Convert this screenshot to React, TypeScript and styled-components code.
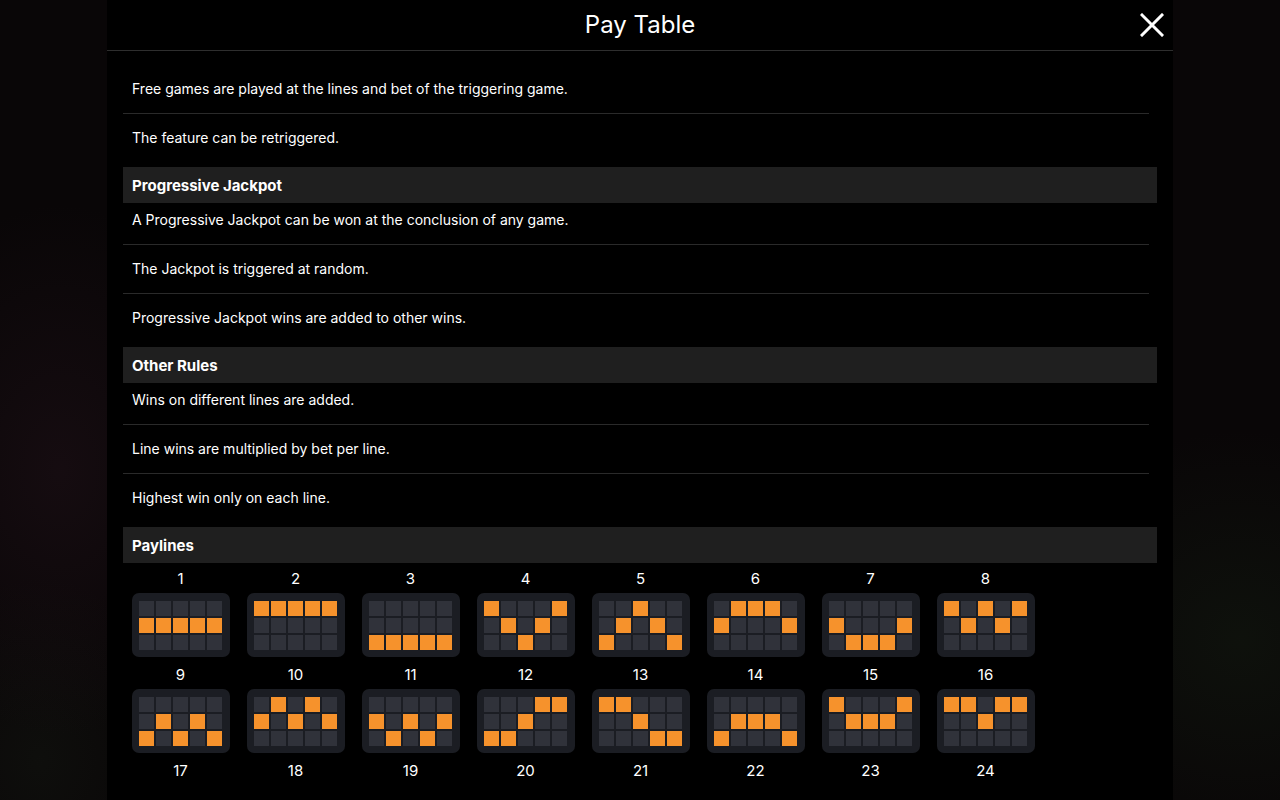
import React from "react";
import styled, { createGlobalStyle } from "styled-components";

const GlobalStyle = createGlobalStyle`
  html, body {
    margin: 0;
    padding: 0;
    height: 100%;
    overflow: hidden;
    background: #070506;
  }
  body {
    font-family: Inter, "Noto Sans", "Liberation Sans", sans-serif;
    color: #fff;
  }
`;

const Screen = styled.div`
  width: 100vw;
  height: 100vh;
  display: flex;
  justify-content: center;
  background:
    radial-gradient(ellipse 260px 380px at 60px 470px, rgba(50, 26, 38, 0.3), transparent 70%),
    radial-gradient(ellipse 300px 300px at 1240px 640px, rgba(22, 34, 20, 0.4), transparent 70%),
    radial-gradient(ellipse 200px 260px at 40px 760px, rgba(24, 30, 22, 0.35), transparent 70%),
    #090607;
`;

const Panel = styled.div`
  width: 1066px;
  height: 100%;
  box-sizing: border-box;
  padding-bottom: 16px;
  background: #000;
  display: flex;
  flex-direction: column;
`;

const Header = styled.header`
  height: 51px;
  flex-shrink: 0;
  display: grid;
  grid-template-columns: 1fr auto 1fr;
  align-items: center;
  border-bottom: 1px solid #2e2e2e;
  box-sizing: border-box;
`;

const Title = styled.h1`
  grid-column: 2;
  margin: 0;
  font-size: 24px;
  font-weight: 400;
  line-height: 50px;
`;

const CloseButton = styled.button`
  grid-column: 3;
  justify-self: end;
  margin-right: 8px;
  width: 26px;
  height: 26px;
  padding: 0;
  border: none;
  background: none;
  cursor: pointer;
  display: flex;
  align-items: center;
  justify-content: center;
`;

const Content = styled.div`
  flex: 1;
  min-height: 0;
  overflow: hidden;
  padding: 14px 16px 0;
  display: flex;
  flex-direction: column;
`;

const SectionTitle = styled.div`
  height: 36px;
  flex-shrink: 0;
  margin-top: 5px;
  padding: 0 9px;
  display: flex;
  align-items: center;
  background: #1f1f1f;
  font-size: 15px;
  font-weight: 700;
`;

const Row = styled.p<{ $first?: boolean; $last?: boolean }>`
  margin: 0 8px 0 0;
  padding: ${({ $first }) => ($first ? "8px" : "15px")} 9px 15px;
  font-size: 14px;
  line-height: 18px;
  border-bottom: ${({ $last }) => ($last ? "none" : "1px solid #2a2a2a")};
`;

const Lines = styled.div`
  display: flex;
  flex-wrap: wrap;
`;

const Line = styled.div`
  width: 115px;
  height: 96px;
  display: flex;
  flex-direction: column;
  align-items: center;
`;

const LineNumber = styled.span`
  height: 30px;
  line-height: 31px;
  font-size: 15px;
`;

const Reels = styled.div`
  width: 98px;
  height: 64px;
  margin-bottom: 2px;
  box-sizing: border-box;
  border-radius: 7px;
  background: #1b1d23;
  display: grid;
  grid-template-columns: repeat(5, 15px);
  grid-template-rows: repeat(3, 15px);
  gap: 2px;
  justify-content: center;
  align-content: center;
`;

const Cell = styled.span<{ $on: boolean }>`
  background: ${({ $on }) => ($on ? "#f6922c" : "#30323a")};
`;

const paylines: number[][] = [
  [1, 1, 1, 1, 1],
  [0, 0, 0, 0, 0],
  [2, 2, 2, 2, 2],
  [0, 1, 2, 1, 0],
  [2, 1, 0, 1, 2],
  [1, 0, 0, 0, 1],
  [1, 2, 2, 2, 1],
  [0, 1, 0, 1, 0],
  [2, 1, 2, 1, 2],
  [1, 0, 1, 0, 1],
  [1, 2, 1, 2, 1],
  [2, 2, 1, 0, 0],
  [0, 0, 1, 2, 2],
  [2, 1, 1, 1, 2],
  [0, 1, 1, 1, 0],
  [0, 0, 1, 0, 0],
  [1, 1, 0, 1, 1],
  [1, 1, 2, 1, 1],
  [0, 2, 0, 2, 0],
  [2, 0, 2, 0, 2],
  [1, 0, 2, 0, 1],
  [1, 2, 0, 2, 1],
  [0, 2, 2, 2, 0],
  [2, 0, 0, 0, 2],
];

const sections = [
  {
    title: null,
    rows: [
      "Free games are played at the lines and bet of the triggering game.",
      "The feature can be retriggered.",
    ],
  },
  {
    title: "Progressive Jackpot",
    rows: [
      "A Progressive Jackpot can be won at the conclusion of any game.",
      "The Jackpot is triggered at random.",
      "Progressive Jackpot wins are added to other wins.",
    ],
  },
  {
    title: "Other Rules",
    rows: [
      "Wins on different lines are added.",
      "Line wins are multiplied by bet per line.",
      "Highest win only on each line.",
    ],
  },
];

const CloseIcon = () => (
  <svg width="24" height="24" viewBox="0 0 24 24">
    <path d="M2 2 L22 22 M22 2 L2 22" stroke="#fff" strokeWidth="3" strokeLinecap="square" />
  </svg>
);

const Payline = ({ index, rows }: { index: number; rows: number[] }) => (
  <Line>
    <LineNumber>{index}</LineNumber>
    <Reels>
      {[0, 1, 2].map((r) =>
        rows.map((hit, c) => <Cell key={`${r}-${c}`} $on={hit === r} />)
      )}
    </Reels>
  </Line>
);

const App = () => {
  return (
    <Screen>
      <GlobalStyle />
      <Panel>
        <Header>
          <Title>Pay Table</Title>
          <CloseButton aria-label="Close">
            <CloseIcon />
          </CloseButton>
        </Header>
        <Content>
          {sections.map((section, s) => (
            <React.Fragment key={s}>
              {section.title && <SectionTitle>{section.title}</SectionTitle>}
              {section.rows.map((text, i) => (
                <Row
                  key={text}
                  $first={!!section.title && i === 0}
                  $last={i === section.rows.length - 1}
                >
                  {text}
                </Row>
              ))}
            </React.Fragment>
          ))}
          <SectionTitle>Paylines</SectionTitle>
          <Lines>
            {paylines.map((rows, i) => (
              <Payline key={i} index={i + 1} rows={rows} />
            ))}
          </Lines>
        </Content>
      </Panel>
    </Screen>
  );
};

export default App;
